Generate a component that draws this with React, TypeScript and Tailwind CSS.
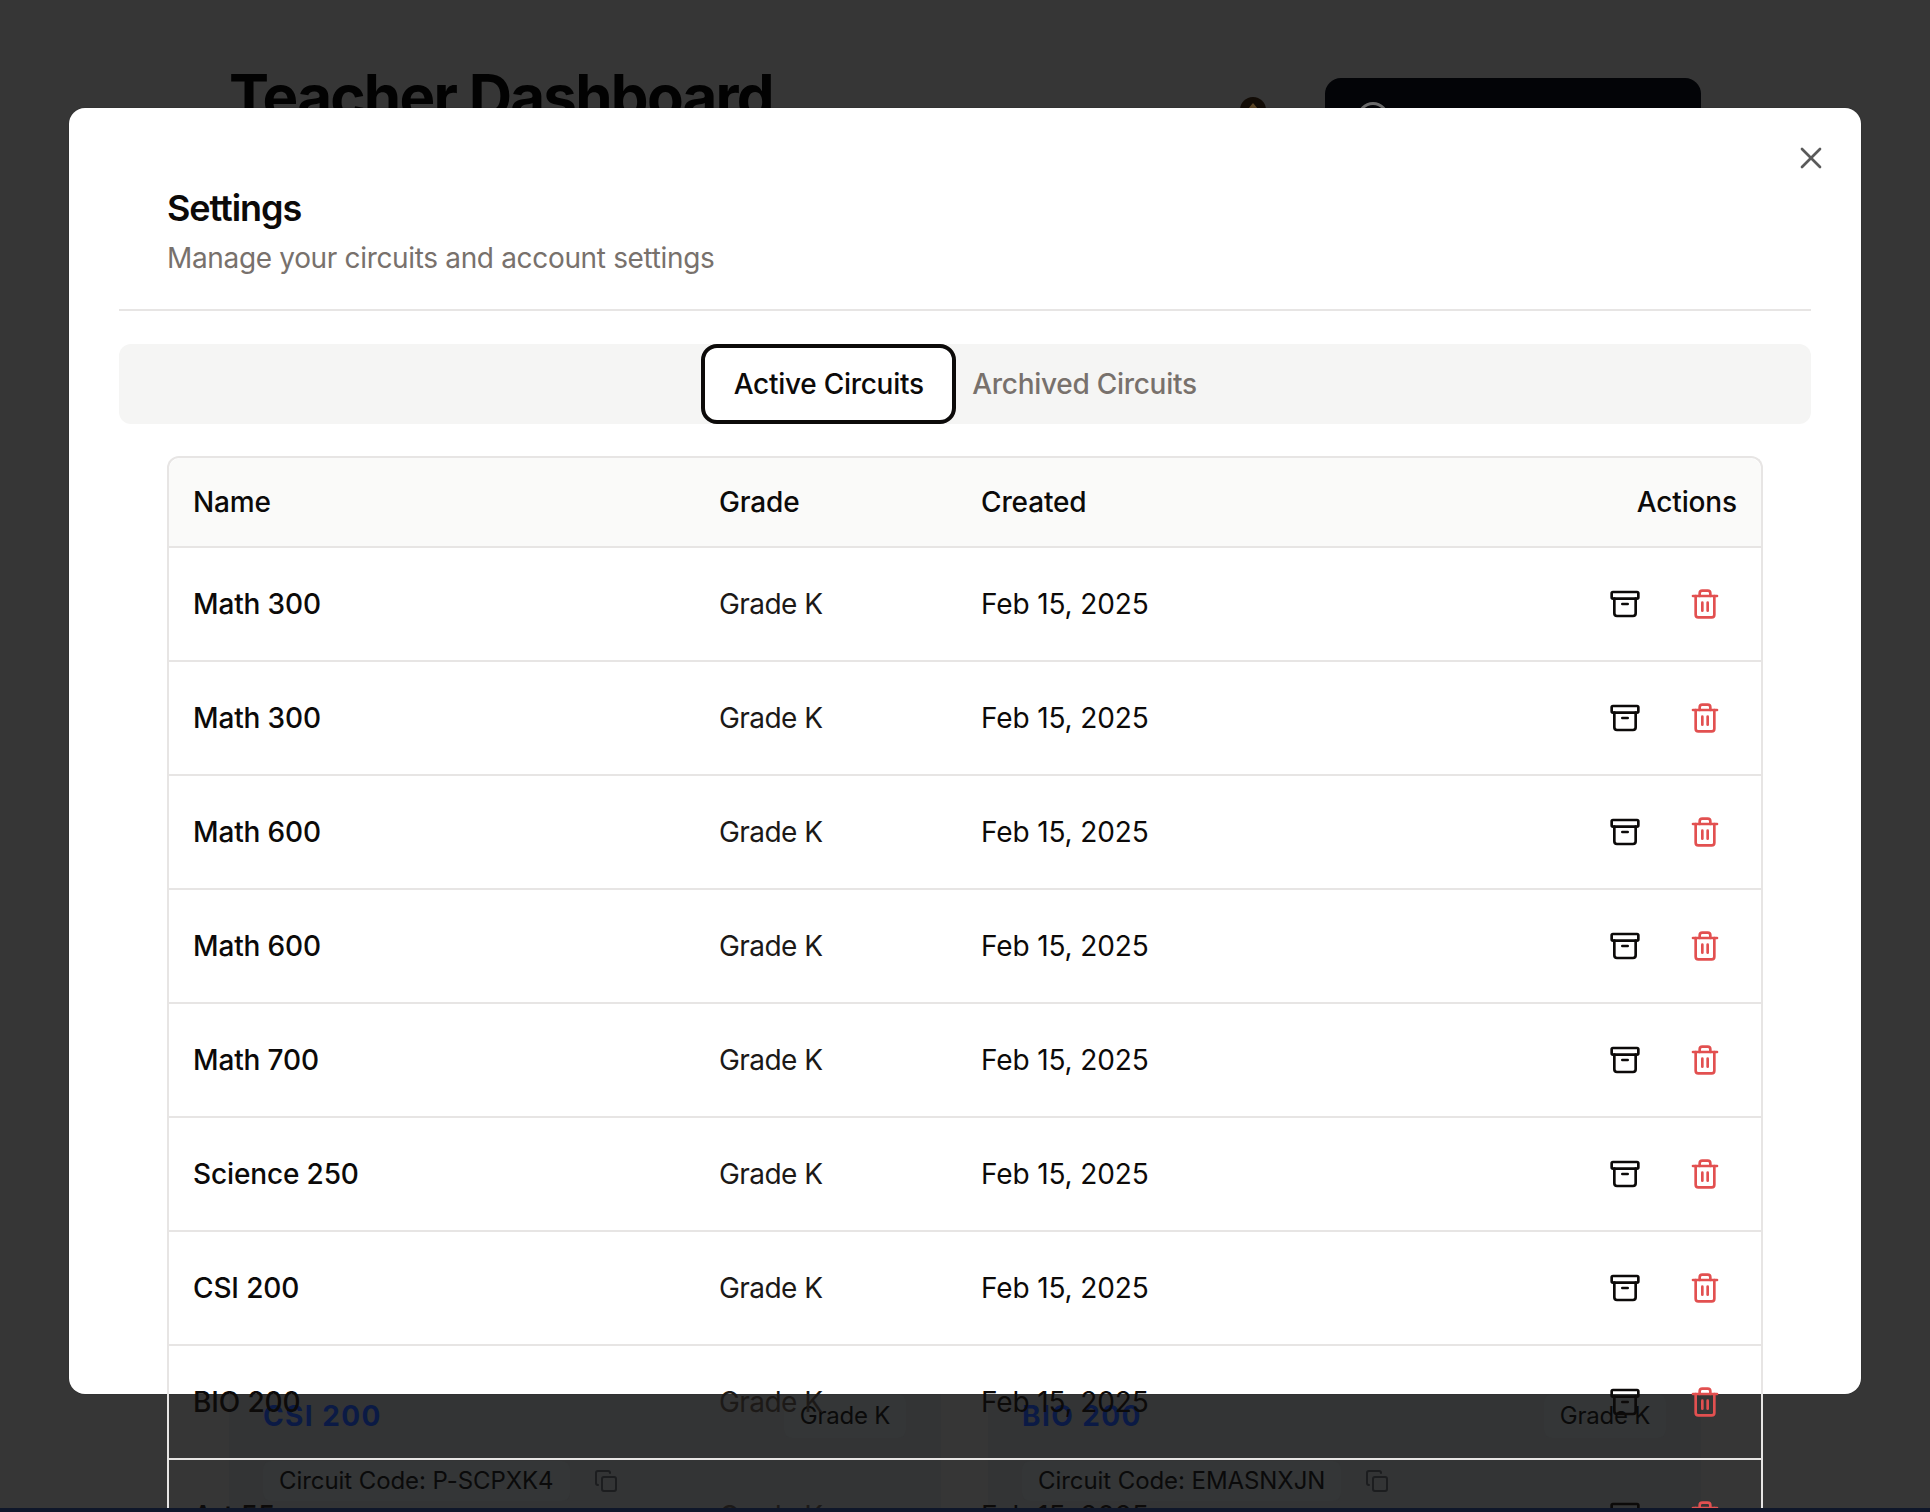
import { Archive, Copy, Trash2, X } from "lucide-react";

const rows = [
  "Math 300",
  "Math 300",
  "Math 600",
  "Math 600",
  "Math 700",
  "Science 250",
  "CSI 200",
  "BIO 200",
  "Art 55",
];

// Dashboard card that peeks out from behind the modal
const BackCard = ({ name, code }: { name: string; code: string }) => (
  <div className="h-[200px] bg-[#333435] px-[34px]">
    <div className="flex h-[86px] items-center justify-between pt-[4px]">
      <span className="text-[28px] font-bold tracking-[0.05em] text-[#0b1a45]">
        {name}
      </span>
      <span className="mr-[1px] flex h-[44px] w-[122px] items-center justify-center rounded-lg bg-[#343637] text-[24px] tracking-[-0.01em] text-[#0a0a0a]">
        Grade K
      </span>
    </div>
    <div className="mt-[4px] flex items-center gap-[24px]">
      <span className="rounded-lg bg-[#343637] px-[16px] py-[4px] text-[24px] leading-[32px] tracking-[-0.003em] text-[#0a0a0a]">
        Circuit Code: {code}
      </span>
      <Copy className="h-[24px] w-[24px] text-[#1c1d1f]" />
    </div>
  </div>
);

export default function App() {
  return (
    <div className="relative h-[1512px] w-full overflow-hidden bg-[#363636] font-['Inter',sans-serif]">
      {/* Dashboard behind the overlay */}
      <div className="pl-[229px] pr-[229px] pt-[66px]">
        <div className="flex items-start justify-between">
          <h1 className="text-[60px] font-bold leading-[60px] tracking-[-0.029em] text-[#020202]">
            Teacher Dashboard
          </h1>
          <div className="flex items-start gap-[59px] pt-[12px]">
            <div className="mt-[19px] flex h-[40px] w-[26px] justify-center rounded-full bg-[#120c06] pt-[6px]">
              <svg width="10" height="6" viewBox="0 0 10 6">
                <path d="M5 0 10 6H0Z" fill="#5a4526" />
              </svg>
            </div>
            <div className="flex h-[80px] w-[376px] items-start rounded-2xl bg-[#030407] pl-[32px] pt-[24px]">
              <div className="h-[32px] w-[32px] rounded-full border-[3px] border-[#6b6b6b]" />
            </div>
          </div>
        </div>
        <div className="mt-[1213px] grid grid-cols-[712px_713px] justify-between">
          <BackCard name="CSI 200" code="P-SCPXK4" />
          <BackCard name="BIO 200" code="EMASNXJN" />
        </div>
      </div>

      {/* Settings modal, table runs past its bottom edge */}
      <div className="absolute left-[69px] top-[108px] h-[1286px] w-[1792px] rounded-2xl bg-white px-[50px] pt-[80px] shadow-[0_0_0_1px_rgba(0,0,0,0.06)]">
        <button className="absolute right-[32px] top-[32px] text-[#5a5a5a]">
          <X className="h-[36px] w-[36px]" strokeWidth={1.8} />
        </button>
        <div className="border-b-2 border-[#e7e5e4] px-[48px] pb-[31px]">
          <h2 className="text-[36px] font-semibold leading-[40px] tracking-[-0.03em] text-[#0c0a09]">
            Settings
          </h2>
          <p className="mt-[10px] text-[28px] leading-[40px] tracking-[-0.012em] text-[#78716c]">
            Manage your circuits and account settings
          </p>
        </div>

        <div className="mt-[33px] flex h-[80px] items-center justify-center rounded-xl bg-[#f5f5f4]">
          <div className="flex h-[80px] w-[255px] items-center justify-center rounded-2xl border-4 border-[#0c0a09] bg-white text-[28px] font-[450] tracking-[-0.01em] text-[#0c0a09]">
            Active Circuits
          </div>
          <div className="flex h-[80px] items-center pl-[16px] pr-[32px] text-[28px] font-[450] tracking-[-0.01em] text-[#78716c]">
            Archived Circuits
          </div>
        </div>

        <div className="mx-[48px] mt-[32px] rounded-t-xl border-x-2 border-t-2 border-[#e7e5e4]">
          <table className="w-full table-fixed border-collapse text-[28px] text-[#0c0a09]">
            <colgroup>
              <col className="w-[526px]" />
              <col className="w-[262px]" />
              <col />
              <col className="w-[260px]" />
            </colgroup>
            <thead>
              <tr className="h-[89px] border-b-2 border-[#e7e5e4] bg-[#fafaf9]">
                <th className="rounded-tl-xl px-[24px] text-left font-[450] tracking-[-0.005em]">Name</th>
                <th className="px-[24px] text-left font-[450] tracking-[-0.005em]">Grade</th>
                <th className="px-[24px] text-left font-[450] tracking-[-0.005em]">Created</th>
                <th className="rounded-tr-xl px-[24px] text-right font-[450] tracking-[-0.005em]">Actions</th>
              </tr>
            </thead>
            <tbody>
              {rows.map((name, i) => (
                <tr key={i} className="h-[114px] border-b-2 border-[#e7e5e4]">
                  <td className="px-[24px] font-[450] tracking-[-0.005em]">{name}</td>
                  <td className="px-[24px] tracking-[-0.02em] text-[#1c1917]">Grade K</td>
                  <td className="px-[24px] tracking-[-0.005em] text-[#0c0a09]">Feb 15, 2025</td>
                  <td className="px-[24px]">
                    <div className="flex justify-end gap-[16px]">
                      <button className="flex h-[64px] w-[64px] items-center justify-center text-[#0c0a09]">
                        <Archive className="h-[32px] w-[32px]" />
                      </button>
                      <button className="flex h-[64px] w-[64px] items-center justify-center text-[#e25050]">
                        <Trash2 className="h-[32px] w-[32px]" />
                      </button>
                    </div>
                  </td>
                </tr>
              ))}
            </tbody>
          </table>
        </div>
      </div>

      {/* Page edge under the browser viewport */}
      <div className="absolute inset-x-0 bottom-0 h-[4px] bg-[#0f172a]" />
    </div>
  );
}
